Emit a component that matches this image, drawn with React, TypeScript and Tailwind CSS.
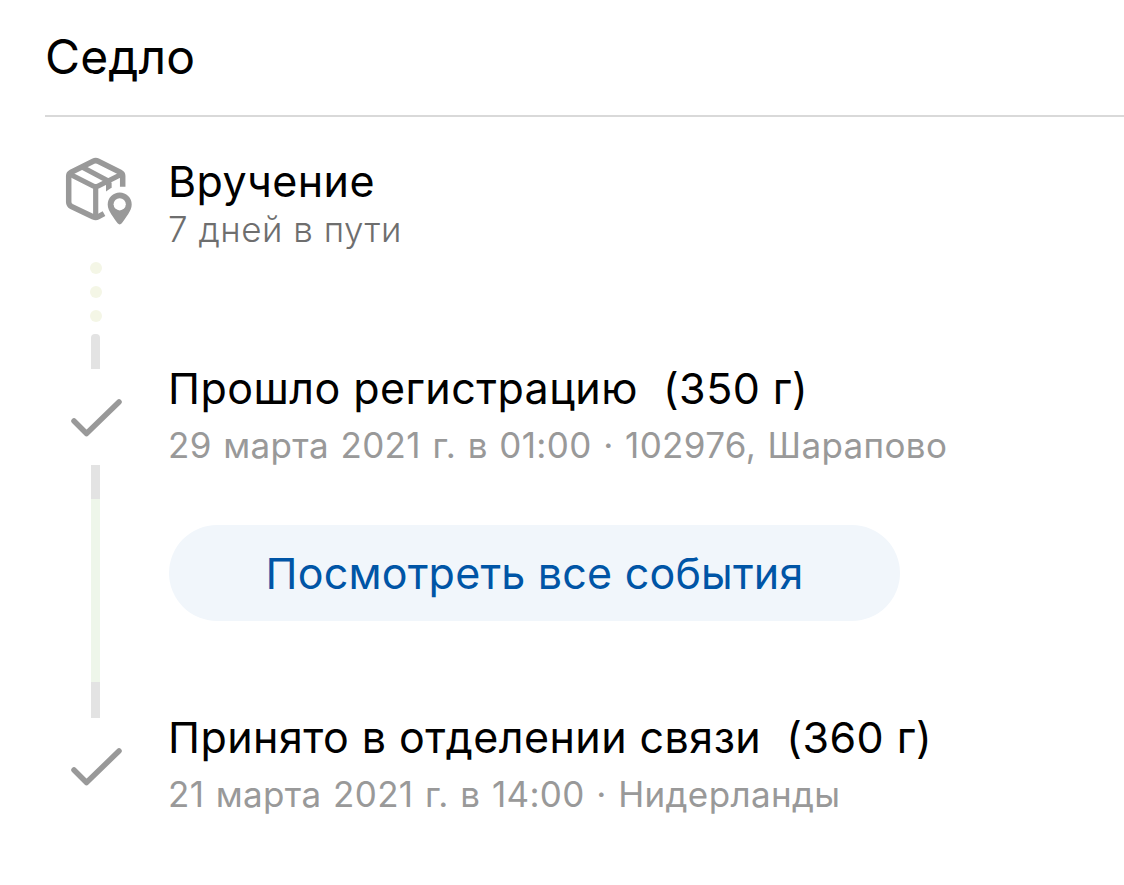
const events = [
  {
    id: 1,
    title: "Прошло регистрацию",
    weight: "(350 г)",
    details: "29 марта 2021 г. в 01:00 · 102976, Шарапово",
    hasHistory: true,
  },
  {
    id: 2,
    title: "Принято в отделении связи",
    weight: "(360 г)",
    details: "21 марта 2021 г. в 14:00 · Нидерланды",
    hasHistory: false,
  },
];

function ParcelIcon() {
  return (
    <svg className="w-[70px] h-[70px] shrink-0" viewBox="0 0 70 70" fill="none">
      <path
        d="M40 57.6 L34 60.9 Q31.7 62.2 29.4 60.9 L7.5 50.5 Q4.7 49 4.7 46 V20 Q4.7 17.5 7.2 16.2 L29.2 5.3 Q31.7 4 34.2 5.3 L56.2 16.2 Q58.7 17.5 58.7 20 V30.7"
        stroke="#999"
        strokeWidth="5.5"
      />
      <path
        d="M5.5 18 L29.2 30 Q31.7 31.3 34.2 30 L58 18 M31.7 31 V61 M17.5 10.8 L44.8 25.2 V32"
        stroke="#999"
        strokeWidth="5.2"
      />
      <path d="M42 27 H47.4 V31.8 L42 35.4 Z" fill="#999" />
      <path
        d="M55.7 36.4 A12 12 0 0 1 67.7 48.4 C67.7 55 61.5 61.5 57.8 67.3 Q55.7 69.5 53.6 67.3 C49.9 61.5 43.7 55 43.7 48.4 A12 12 0 0 1 55.7 36.4 Z"
        fill="#999"
      />
      <circle cx="55.7" cy="48.3" r="6.1" fill="white" />
    </svg>
  );
}

function CheckIcon() {
  return (
    <svg className="w-[52px] h-[40px] shrink-0" viewBox="0 0 52 40" fill="none">
      <path
        d="M4 23 L16.5 35.5 L49 4"
        stroke="#999"
        strokeWidth="5.5"
        strokeLinecap="round"
        strokeLinejoin="round"
      />
    </svg>
  );
}

function Timeline() {
  return (
    <div className="flex w-[63px] shrink-0 flex-col items-center">
      <div className="mt-[39px] flex h-[70px] w-full justify-start">
        <ParcelIcon />
      </div>
      <div className="mt-[36px] flex flex-col gap-3">
        <div className="h-3 w-3 rounded-full bg-[#f4f6e6]" />
        <div className="h-3 w-3 rounded-full bg-[#f4f6e6]" />
        <div className="h-3 w-3 rounded-full bg-[#f4f6e6]" />
      </div>
      <div className="mt-[12px] h-[35px] w-[9px] rounded-t-[4px] bg-[#e3e3e3]" />
      <div className="mt-[29px]">
        <CheckIcon />
      </div>
      <div className="mt-[27px] h-[34px] w-[9px] bg-[#e3e3e3]" />
      <div className="h-[183px] w-[9px] bg-[#eef6ea]" />
      <div className="h-[36px] w-[9px] bg-[#e3e3e3]" />
      <div className="mt-[29px]">
        <CheckIcon />
      </div>
    </div>
  );
}

export default function App() {
  return (
    <div className="w-[1124px] h-[885px] overflow-hidden bg-white font-['Inter','Liberation_Sans',sans-serif] text-black">
      <header className="ml-[45px] h-[117px] border-b-2 border-[#d9d9d9] pt-[27px]">
        <h1 className="text-[48px] leading-[60px] tracking-[0.1px] whitespace-nowrap">Седло</h1>
      </header>

      <main className="flex pl-[64px]">
        <Timeline />

        <div className="ml-[41px] whitespace-nowrap">
          <div className="h-[207px] pt-[37px]">
            <h2 className="text-[43px] leading-[54px] tracking-[0.45px]">Вручение</h2>
            <p className="mt-[-1px] text-[35px] leading-[44px] font-light tracking-[0.5px] text-[#6e6e6e]">
              7 дней в пути
            </p>
          </div>

          {events.map((event) => (
            <div key={event.id} className="h-[349px] pt-[37px]">
              <h2 className="text-[43px] leading-[54px] tracking-[0.45px]">
                {event.title}
                {"\u00a0 "}
                {event.weight}
              </h2>
              <p className="text-[35px] leading-[60px] tracking-[0.35px] [word-spacing:1.3px] text-[#999]">
                {event.details}
              </p>
              {event.hasHistory && (
                <button className="mt-[50px] ml-px h-[96px] w-[731px] rounded-full bg-[#f1f6fb] text-[43px] tracking-[0.2px] text-[#0055a6]">
                  Посмотреть все события
                </button>
              )}
            </div>
          ))}
        </div>
      </main>
    </div>
  );
}
